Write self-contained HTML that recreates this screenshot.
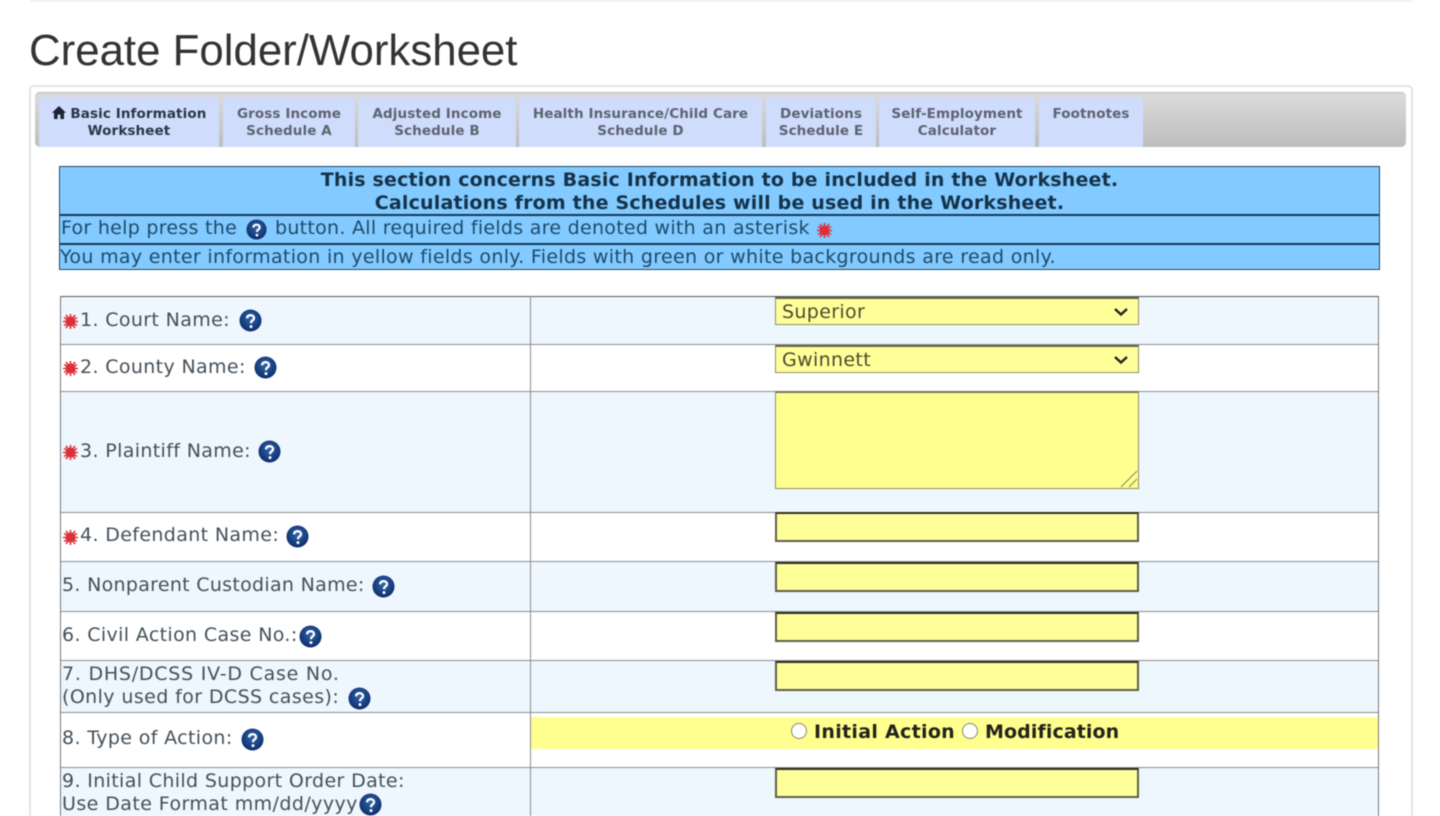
<!DOCTYPE html>
<html><head><meta charset="utf-8"><title>Create Folder/Worksheet</title>
<style>
html,body{margin:0;padding:0;background:#fff;width:1440px;height:816px;overflow:hidden}
body{position:relative;font-family:"DejaVu Sans",Verdana,sans-serif}
#w{position:absolute;left:0;top:0;width:1440px;height:816px;overflow:hidden;filter:blur(.5px)}
.a{position:absolute;white-space:nowrap}
.b{position:absolute}
.tab{position:absolute;top:97px;height:50px;background:#cfdcfb;border-radius:4px 4px 0 0;text-align:center;font-weight:bold;font-size:13.5px;line-height:17px;color:#5d6470;padding-top:9px;box-sizing:border-box;white-space:nowrap;letter-spacing:.1px}
.hd{left:60px;width:1319px;text-align:center;font-weight:bold;font-size:19px;line-height:23px;color:#16324a;letter-spacing:.18px}
.l{font-size:19px;line-height:23px;color:#44505a;letter-spacing:.36px}
.q{position:absolute;width:23px;height:23px}
.star{position:absolute;width:17px;height:17px}
.row{position:absolute;left:61px;width:1317px}
.ln{position:absolute;left:60px;width:1319px;height:1px;background:#8b8d8e}
.sel{position:absolute;left:775px;width:364px;height:28px;background:#ffff99;border:1px solid #8f9068;border-top:2px solid #66664a;box-sizing:border-box;font-size:19px;line-height:27px;padding-left:6px;color:#4a4a30;letter-spacing:.35px}
.inp{position:absolute;left:775px;width:364px;height:30px;background:#ffff99;border:2px solid #5e5e48;border-top-color:#2f2f22;box-sizing:border-box}
</style></head><body><div id="w">
<svg width="0" height="0" style="position:absolute"><defs>
<radialGradient id="g" cx=".5" cy=".4" r=".6"><stop offset="0" stop-color="#2f66a8"/><stop offset="1" stop-color="#0d2c6b"/></radialGradient>
<symbol id="help" viewBox="0 0 23 23"><circle cx="11.5" cy="11.5" r="11" fill="url(#g)"/><path d="M8 9.4C8.2 7.2 9.6 6.2 11.6 6.2c2 0 3.4 1.1 3.4 2.8 0 1.3-.7 2-1.8 2.7-.8.5-1.1 1-1.1 1.8v.7" fill="none" stroke="#fff" stroke-width="2.3"/><circle cx="12" cy="17.6" r="1.5" fill="#fff"/></symbol>
<symbol id="ast" viewBox="0 0 17 17"><path d="M8.5 1v15M2 4.5l13 8M15 4.5l-13 8M1 8.5h15M4 2l9 13M13 2L4 15" stroke="#dc3039" stroke-width="1.6" fill="none"/><circle cx="8.5" cy="8.5" r="5" fill="#dc3039"/></symbol>
</defs></svg>

<div class="b" style="left:30px;top:0;width:1382px;height:2px;background:#f0f0f0"></div>
<div class="a" style="left:29px;top:26px;font-family:'Liberation Sans',Arial,sans-serif;font-size:43.8px;line-height:50px;color:#333">Create Folder/Worksheet</div>

<div class="b" style="left:29px;top:85px;width:1384px;height:760px;border:2px solid #e4e4e4;border-radius:5px;box-sizing:border-box;background:#fff"></div>
<div class="b" style="left:35px;top:92px;width:1371px;height:55px;border-radius:5px;background:linear-gradient(#dcdcdc,#bdbdbd);box-shadow:inset 0 1px 0 #bbb"></div>

<div class="tab" style="left:39px;width:180px;color:#2c3647"><svg width="14" height="13" viewBox="0 0 14 13" style="vertical-align:-1px"><path d="M7 0L0 6.8h2V13h3.6V8.6h2.8V13H12V6.8h2z" fill="#1d2433"/></svg> Basic Information<br>Worksheet</div>
<div class="tab" style="left:223px;width:132px">Gross Income<br>Schedule A</div>
<div class="tab" style="left:358px;width:158px">Adjusted Income<br>Schedule B</div>
<div class="tab" style="left:519px;width:243px">Health Insurance/Child Care<br>Schedule D</div>
<div class="tab" style="left:766px;width:110px">Deviations<br>Schedule E</div>
<div class="tab" style="left:879px;width:156px">Self-Employment<br>Calculator</div>
<div class="tab" style="left:1039px;width:104px">Footnotes</div>

<div class="b" style="left:59px;top:166px;width:1321px;height:104px;background:#82caff;border:1px solid #1f4a66;box-sizing:border-box"></div>
<div class="b" style="left:60px;top:214px;width:1319px;height:2px;background:#123a5a"></div>
<div class="b" style="left:60px;top:243px;width:1319px;height:2px;background:#123a5a"></div>
<div class="a hd" style="top:168.5px">This section concerns Basic Information to be included in the Worksheet.</div>
<div class="a hd" style="top:191.5px">Calculations from the Schedules will be used in the Worksheet.</div>
<div class="a l" style="left:61px;top:217px;color:#1e4a6a;letter-spacing:.28px">For help press the</div>
<svg class="q" style="left:246px;top:219px;width:21px;height:21px"><use href="#help"/></svg>
<div class="a l" style="left:275px;top:217px;color:#1e4a6a;letter-spacing:.28px">button. All required fields are denoted with an asterisk</div>
<svg class="star" style="left:816px;top:222px"><use href="#ast"/></svg>
<div class="a l" style="left:60px;top:246px;color:#1e4a6a;letter-spacing:.32px">You may enter information in yellow fields only. Fields with green or white backgrounds are read only.</div>

<div class="row" style="top:297px;height:47px;background:#eef6fe"></div>
<div class="row" style="top:392px;height:120px;background:#eef6fe"></div>
<div class="row" style="top:562px;height:49px;background:#eef6fe"></div>
<div class="row" style="top:661px;height:51px;background:#eef6fe"></div>
<div class="row" style="top:768px;height:48px;background:#eef6fe"></div>
<div class="b" style="left:530px;top:717px;width:849px;height:32px;background:#ffff8f"></div>

<div class="ln" style="top:296px;background:#55585a"></div>
<div class="ln" style="top:344px"></div>
<div class="ln" style="top:391px"></div>
<div class="ln" style="top:512px"></div>
<div class="ln" style="top:561px"></div>
<div class="ln" style="top:611px"></div>
<div class="ln" style="top:660px"></div>
<div class="ln" style="top:712px"></div>
<div class="ln" style="top:767px"></div>
<div class="b" style="left:60px;top:296px;width:1px;height:520px;background:#77797b"></div>
<div class="b" style="left:530px;top:296px;width:1px;height:520px;background:#8b8d8e"></div>
<div class="b" style="left:1378px;top:296px;width:1px;height:520px;background:#77797b"></div>

<svg class="star" style="left:62px;top:313px"><use href="#ast"/></svg>
<div class="a l" style="left:80px;top:309px">1. Court Name:</div>
<svg class="q" style="left:239px;top:309px"><use href="#help"/></svg>
<svg class="star" style="left:62px;top:360px"><use href="#ast"/></svg>
<div class="a l" style="left:80px;top:356px">2. County Name:</div>
<svg class="q" style="left:254px;top:356px"><use href="#help"/></svg>
<svg class="star" style="left:62px;top:444px"><use href="#ast"/></svg>
<div class="a l" style="left:80px;top:440px">3. Plaintiff Name:</div>
<svg class="q" style="left:258px;top:440px"><use href="#help"/></svg>
<svg class="star" style="left:62px;top:529px"><use href="#ast"/></svg>
<div class="a l" style="left:80px;top:524px">4. Defendant Name:</div>
<svg class="q" style="left:286px;top:525px"><use href="#help"/></svg>
<div class="a l" style="left:62px;top:574px;letter-spacing:.3px">5. Nonparent Custodian Name:</div>
<svg class="q" style="left:372px;top:575px"><use href="#help"/></svg>
<div class="a l" style="left:62px;top:624px">6. Civil Action Case No.:</div>
<svg class="q" style="left:299px;top:625px"><use href="#help"/></svg>
<div class="a l" style="left:62px;top:663px;letter-spacing:.76px">7. DHS/DCSS IV-D Case No.</div>
<div class="a l" style="left:62px;top:686px;letter-spacing:.4px">(Only used for DCSS cases):</div>
<svg class="q" style="left:348px;top:687px"><use href="#help"/></svg>
<div class="a l" style="left:62px;top:727px">8. Type of Action:</div>
<svg class="q" style="left:241px;top:728px"><use href="#help"/></svg>
<div class="a l" style="left:62px;top:770px">9. Initial Child Support Order Date:</div>
<div class="a l" style="left:62px;top:793px;letter-spacing:.42px">Use Date Format mm/dd/yyyy</div>
<svg class="q" style="left:359px;top:793px"><use href="#help"/></svg>

<div class="sel" style="top:297px">Superior<svg width="16" height="10" viewBox="0 0 16 10" style="position:absolute;right:9px;top:8px"><path d="M2 2l6 5.5L14 2" fill="none" stroke="#222" stroke-width="2.4"/></svg></div>
<div class="sel" style="top:345px">Gwinnett<svg width="16" height="10" viewBox="0 0 16 10" style="position:absolute;right:9px;top:8px"><path d="M2 2l6 5.5L14 2" fill="none" stroke="#222" stroke-width="2.4"/></svg></div>
<div class="b" style="left:775px;top:391px;width:364px;height:98px;background:#ffff8f;border:1px solid #8f9068;border-top:2px solid #77775a;box-sizing:border-box"><svg width="18" height="18" viewBox="0 0 18 18" style="position:absolute;right:0;bottom:0"><path d="M1 17L17 1M9 17l8-8" stroke="#8f9068" stroke-width="1.2"/></svg></div>
<div class="inp" style="top:512px"></div>
<div class="inp" style="top:562px"></div>
<div class="inp" style="top:612px"></div>
<div class="inp" style="top:661px"></div>
<div class="inp" style="top:768px"></div>

<div class="b" style="left:791px;top:723px;width:16px;height:16px;border-radius:50%;background:#fff;border:1px solid #88886a;box-sizing:border-box"></div>
<div class="a" style="left:814px;top:721px;font-size:19px;line-height:23px;font-weight:bold;color:#23231a;letter-spacing:.3px">Initial Action</div>
<div class="b" style="left:962px;top:723px;width:16px;height:16px;border-radius:50%;background:#fff;border:1px solid #88886a;box-sizing:border-box"></div>
<div class="a" style="left:985px;top:721px;font-size:19px;line-height:23px;font-weight:bold;color:#23231a;letter-spacing:.1px">Modification</div>
</div></body></html>
